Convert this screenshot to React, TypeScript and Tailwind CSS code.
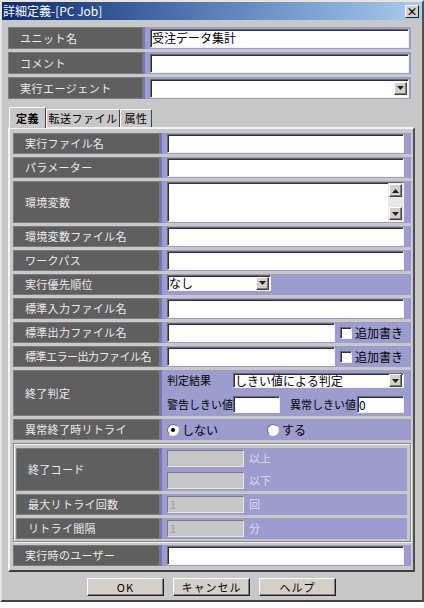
import type { ReactNode } from "react";

const font = "font-['Noto_Sans_CJK_JP','Noto_Sans',sans-serif]";

function Arrow({ up = false }: { up?: boolean }) {
  return (
    <svg width="7" height="4" viewBox="0 0 7 4">
      <path d={up ? "M3.5 0L7 4H0z" : "M0 0h7L3.5 4z"} fill="#222" />
    </svg>
  );
}

function DropButton({ up = false }: { up?: boolean }) {
  return (
    <div className="flex h-[13px] w-[13px] shrink-0 items-center justify-center border border-t-white border-l-white border-b-[#404040] border-r-[#404040] bg-[#d4d0c8] shadow-[inset_-1px_-1px_0_#808080]">
      <Arrow up={up} />
    </div>
  );
}

function Label({ children, className = "" }: { children: ReactNode; className?: string }) {
  return (
    <div
      className={`flex shrink-0 items-center whitespace-nowrap border border-[#7c7c7c] bg-[#5f5f5f] pl-[11px] text-[11px] leading-none text-[#ececec] ${className}`}
    >
      {children}
    </div>
  );
}

function Cell({ children, className = "" }: { children?: ReactNode; className?: string }) {
  return (
    <div className={`flex flex-1 whitespace-nowrap border-l-2 border-[#7676bb] bg-[#9c9ccf] text-[11px] leading-none ${className}`}>
      {children}
    </div>
  );
}

function TextBox({ value = "", className = "" }: { value?: string; className?: string }) {
  return (
    <div
      className={`flex items-center border border-t-[#6a6a6a] border-l-[#6a6a6a] border-b-[#f2f2f2] border-r-[#f2f2f2] bg-white pl-[1px] text-[12px] leading-none text-black shadow-[inset_1px_1px_0_#303030] ${className}`}
    >
      {value}
    </div>
  );
}

function Disabled({ value = "" }: { value?: string }) {
  return (
    <div className="flex h-[17px] w-[77px] items-center border border-t-[#7a7a7a] border-l-[#7a7a7a] border-b-[#e6e6e6] border-r-[#e6e6e6] bg-[#c6c6c6] pl-[2px] text-[11px] leading-none text-[#9a9a9a]">
      {value}
    </div>
  );
}

function Combo({ value = "", className = "" }: { value?: string; className?: string }) {
  return (
    <div
      className={`flex items-center border border-t-[#6a6a6a] border-l-[#6a6a6a] border-b-[#f2f2f2] border-r-[#f2f2f2] bg-white pl-[1px] pr-[1px] text-[12px] leading-none text-black shadow-[inset_1px_1px_0_#303030] ${className}`}
    >
      <span className="flex-1">{value}</span>
      <DropButton />
    </div>
  );
}

function Check() {
  return (
    <div className="flex items-center gap-[3px] pl-[5px] text-[12px] text-black">
      <div className="h-[12px] w-[12px] border border-t-[#6a6a6a] border-l-[#6a6a6a] border-b-[#f2f2f2] border-r-[#f2f2f2] bg-white shadow-[inset_1px_1px_0_#303030]" />
      <span>追加書き</span>
    </div>
  );
}

function Radio({ on, label, className = "" }: { on: boolean; label: string; className?: string }) {
  return (
    <div className={`flex items-center gap-[3px] text-[12px] text-black ${className}`}>
      <div className="flex h-[12px] w-[12px] items-center justify-center rounded-full border border-t-[#6a6a6a] border-l-[#6a6a6a] border-b-[#f2f2f2] border-r-[#f2f2f2] bg-white">
        {on && <div className="h-[4px] w-[4px] rounded-full bg-black" />}
      </div>
      <span>{label}</span>
    </div>
  );
}

function PanelRow({ label, value }: { label: string; value?: string }) {
  return (
    <div className="flex h-[21px]">
      <Label className="w-[147px] tracking-[0.3px]">{label}</Label>
      <Cell className="items-center pl-[5px] pr-[7px]">
        <TextBox value={value} className="h-[19px] flex-1" />
      </Cell>
    </div>
  );
}

export default function App() {
  return (
    <div className={`h-[608px] w-[424px] bg-white ${font}`}>
      <div className="flex h-[602px] w-[424px] flex-col border-2 border-t-[#e4e4e4] border-l-[#e4e4e4] border-b-[#404040] border-r-[#505050] bg-[#c8c8c8]">
        {/* title bar */}
        <div className="flex h-[18px] items-center bg-gradient-to-r from-[#0e2a6e] via-[#5a7fba] to-[#a8cbee] pl-[1px] pr-[3px]">
          <span className="flex-1 text-[12px] leading-none text-white">詳細定義-[PC Job]</span>
          <div className="flex h-[13px] w-[14px] items-center justify-center border border-t-white border-l-white border-b-[#202020] border-r-[#202020] bg-[#d4d0c8] text-[11px] font-bold leading-none text-black">
            ×
          </div>
        </div>

        {/* top rows */}
        <div className="flex flex-col gap-[3px] pl-[6px] pr-[11px] pt-[7px]">
          <div className="flex h-[22px]">
            <Label className="w-[135px] tracking-[0.5px]">ユニット名</Label>
            <Cell className="items-center pl-[5px] pr-[2px]">
              <TextBox value="受注データ集計" className="h-[19px] flex-1" />
            </Cell>
          </div>
          <div className="flex h-[22px]">
            <Label className="w-[135px] tracking-[0.5px]">コメント</Label>
            <Cell className="items-center pl-[5px] pr-[2px]">
              <TextBox className="h-[19px] flex-1" />
            </Cell>
          </div>
          <div className="flex h-[22px]">
            <Label className="w-[135px] tracking-[0.5px]">実行エージェント</Label>
            <Cell className="items-center pl-[5px] pr-[2px]">
              <Combo className="h-[19px] flex-1" />
            </Cell>
          </div>
        </div>

        {/* tabs */}
        <div className="mt-[8px] flex items-end pl-[7px] text-[11px] leading-none tracking-[0.5px] text-black">
          <div className="relative z-10 -mb-[1px] flex h-[21px] w-[37px] items-center justify-center rounded-t-[2px] border border-b-0 border-t-white border-l-white border-r-[#404040] bg-[#c8c8c8] font-bold">
            定義
          </div>
          <div className="flex h-[18px] w-[74px] items-center justify-center whitespace-nowrap rounded-t-[2px] border border-b-0 border-t-white border-l-white border-r-[#404040] bg-[#c8c8c8]">
            転送ファイル
          </div>
          <div className="flex h-[18px] w-[32px] items-center justify-center rounded-t-[2px] border border-b-0 border-t-white border-l-white border-r-[#404040] bg-[#c8c8c8]">
            属性
          </div>
        </div>

        {/* panel */}
        <div className="ml-[6px] flex w-[407px] flex-col gap-[3px] border-2 border-t-[#f4f4f4] border-l-[#f4f4f4] border-b-[#404040] border-r-[#505050] pb-[4px] pl-[3px] pr-[2px] pt-[4px]">
          <PanelRow label="実行ファイル名" />
          <PanelRow label="パラメーター" />
          <div className="flex h-[42px]">
            <Label className="w-[147px] tracking-[0.3px]">環境変数</Label>
            <Cell className="py-[1px] pl-[5px] pr-[7px]">
              <div className="flex flex-1 border border-t-[#6a6a6a] border-l-[#6a6a6a] border-b-[#f2f2f2] border-r-[#f2f2f2] bg-white shadow-[inset_1px_1px_0_#303030]">
                <div className="flex-1" />
                <div className="flex flex-col justify-between bg-[#e8e8e8] p-[1px]">
                  <DropButton up />
                  <DropButton />
                </div>
              </div>
            </Cell>
          </div>
          <PanelRow label="環境変数ファイル名" />
          <PanelRow label="ワークパス" />
          <div className="flex h-[21px]">
            <Label className="w-[147px] tracking-[0.3px]">実行優先順位</Label>
            <Cell className="items-start pl-[5px] pt-[1px]">
              <Combo value="なし" className="h-[16px] w-[104px]" />
            </Cell>
          </div>
          <PanelRow label="標準入力ファイル名" />
          <div className="flex h-[21px]">
            <Label className="w-[147px] tracking-[0.3px]">標準出力ファイル名</Label>
            <Cell className="items-center pl-[5px]">
              <TextBox className="h-[19px] w-[168px]" />
              <Check />
            </Cell>
          </div>
          <div className="flex h-[21px]">
            <Label className="w-[147px] tracking-[-0.5px]">標準エラー出力ファイル名</Label>
            <Cell className="items-center pl-[5px]">
              <TextBox className="h-[19px] w-[168px]" />
              <Check />
            </Cell>
          </div>
          <div className="flex h-[46px]">
            <Label className="w-[147px] tracking-[0.3px]">終了判定</Label>
            <Cell className="flex-col pl-[5px] pr-[5px] text-black">
              <div className="mt-[3px] flex h-[15px] items-center">
                <span className="w-[66px]">判定結果</span>
                <Combo value="しきい値による判定" className="h-[15px] w-[171px]" />
              </div>
              <div className="mt-[8px] flex h-[17px] items-center">
                <span className="w-[66px]">警告しきい値</span>
                <TextBox className="h-[17px] w-[47px]" />
                <span className="ml-[10px] w-[67px]">異常しきい値</span>
                <TextBox value="0" className="h-[17px] w-[47px]" />
              </div>
            </Cell>
          </div>
          <div className="flex h-[21px]">
            <Label className="w-[147px] tracking-[0.3px]">異常終了時リトライ</Label>
            <Cell className="items-center pl-[5px]">
              <Radio on label="しない" className="w-[100px]" />
              <Radio on={false} label="する" />
            </Cell>
          </div>

          {/* retry group */}
          <div className="flex flex-col gap-[3px] border border-[#8a8a8a] pb-[2px] pl-[2px] pr-[3px] pt-[4px] shadow-[inset_1px_1px_0_#f2f2f2,1px_1px_0_#f2f2f2]">
            <div className="flex h-[43px]">
              <Label className="w-[144px] tracking-[0.3px]">終了コード</Label>
              <Cell className="flex-col justify-center gap-[5px] pl-[5px] text-[#dcdcea]">
                <div className="flex items-center gap-[5px]">
                  <Disabled />
                  <span>以上</span>
                </div>
                <div className="flex items-center gap-[5px]">
                  <Disabled />
                  <span>以下</span>
                </div>
              </Cell>
            </div>
            <div className="flex h-[21px]">
              <Label className="w-[144px] tracking-[0.3px]">最大リトライ回数</Label>
              <Cell className="items-center gap-[5px] pl-[5px] text-[#dcdcea]">
                <Disabled value="1" />
                <span>回</span>
              </Cell>
            </div>
            <div className="flex h-[21px]">
              <Label className="w-[144px] tracking-[0.3px]">リトライ間隔</Label>
              <Cell className="items-center gap-[5px] pl-[5px] text-[#dcdcea]">
                <Disabled value="1" />
                <span>分</span>
              </Cell>
            </div>
          </div>

          <PanelRow label="実行時のユーザー" />
        </div>

        {/* buttons */}
        <div className="mt-[6px] flex justify-center gap-[9px] pr-[1px]">
          {["OK", "キャンセル", "ヘルプ"].map((b) => (
            <div
              key={b}
              className="flex h-[18px] w-[77px] items-center justify-center border border-t-white border-l-white border-b-[#202020] border-r-[#202020] bg-[#d4d0c8] text-[11px] leading-none tracking-[1px] text-black shadow-[inset_-1px_-1px_0_#808080]"
            >
              {b}
            </div>
          ))}
        </div>
      </div>
    </div>
  );
}
